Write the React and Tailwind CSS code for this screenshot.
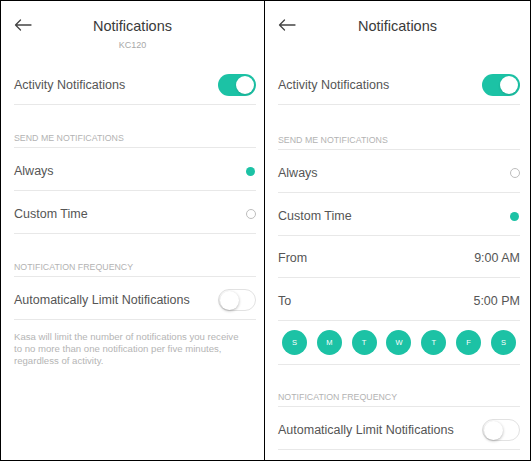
import React from 'react';

const TEAL = 'bg-[#1cc2a5]';

const BackArrow = () => (
  <svg width="18" height="12" viewBox="0 0 18 12" fill="none" stroke="#444" strokeWidth="1.3" strokeLinecap="round" strokeLinejoin="round">
    <path d="M17 6H1.5M6.5 1L1.5 6l5 5" />
  </svg>
);

const Toggle = ({ on }) =>
  on ? (
    <div className={`w-[38px] h-[22px] rounded-full ${TEAL} flex items-center justify-end pr-[2px]`}>
      <div className="w-[18px] h-[18px] rounded-full bg-white shadow-sm" />
    </div>
  ) : (
    <div className="w-[38px] h-[22px] rounded-full bg-white border border-[#e2e2e2] flex items-center pl-[1px]">
      <div className="w-[19px] h-[19px] rounded-full bg-white shadow-[0_1px_3px_rgba(0,0,0,0.3)]" />
    </div>
  );

const Radio = ({ on }) =>
  on ? (
    <div className={`w-[9px] h-[9px] rounded-full ${TEAL} mr-[1px]`} />
  ) : (
    <div className="w-[10px] h-[10px] rounded-full border border-[#bdbdbd]" />
  );

const Row = ({ label, right, h = 'h-[43px]' }) => (
  <div className={`${h} flex items-center justify-between pt-[4px] border-b border-[#e8e8e8]`}>
    <span className="text-[12.5px] text-[#555]">{label}</span>
    {right}
  </div>
);

const Section = ({ title, h = 'h-[43px]' }) => (
  <div className={`${h} flex items-end pb-[4px] border-b border-[#e8e8e8]`}>
    <span className="text-[8.8px] leading-[10px] text-[#b3b3b3]">{title}</span>
  </div>
);

const Header = ({ sub }) => (
  <div className="h-[61px] relative">
    <div className="absolute left-[13px] top-[18px]">
      <BackArrow />
    </div>
    <div className="pt-[16px] text-center text-[14.5px] leading-[18px] text-[#3a3a3a]">Notifications</div>
    {sub && <div className="mt-[5px] text-center text-[9px] leading-[11px] text-[#a8a8a8]">{sub}</div>}
  </div>
);

const days = ['S', 'M', 'T', 'W', 'T', 'F', 'S'];

export default function App() {
  return (
    <div className="w-[531px] h-[461px] flex border border-black bg-white" style={{ fontFamily: '"Liberation Sans", Arial, sans-serif' }}>
      {/* left screen */}
      <div className="w-[263px] h-full">
        <Header sub="KC120" />
        <div className="pl-[13px] pr-[8px]">
          <Row label="Activity Notifications" right={<Toggle on />} />
          <Section title="SEND ME NOTIFICATIONS" />
          <Row label="Always" right={<Radio on />} />
          <Row label="Custom Time" right={<Radio />} />
          <Section title="NOTIFICATION FREQUENCY" />
          <Row label="Automatically Limit Notifications" right={<Toggle />} />
          <p className="pt-[11px] text-[9.6px] leading-[12px] text-[#b5b5b5] pr-[8px]">
            Kasa will limit the number of notifications you receive to no more than one notification per five minutes, regardless of activity.
          </p>
        </div>
      </div>

      <div className="w-px h-full bg-black" />

      {/* right screen */}
      <div className="flex-1 h-full">
        <Header />
        <div className="pl-[13px] pr-[10px]">
          <Row label="Activity Notifications" right={<Toggle on />} />
          <Section title="SEND ME NOTIFICATIONS" h="h-[45px]" />
          <Row label="Always" right={<Radio />} />
          <Row label="Custom Time" right={<Radio on />} />
          <Row label="From" h="h-[42px]" right={<span className="text-[12.5px] text-[#555]">9:00 AM</span>} />
          <Row label="To" right={<span className="text-[12.5px] text-[#555]">5:00 PM</span>} />
          <div className="h-[44px] flex items-center justify-between px-[4px] border-b border-[#e8e8e8]">
            {days.map((d, i) => (
              <div key={i} className={`w-[25px] h-[25px] rounded-full ${TEAL} flex items-center justify-center text-[7.5px] text-white`}>
                {d}
              </div>
            ))}
          </div>
          <Section title="NOTIFICATION FREQUENCY" h="h-[42px]" />
          <Row label="Automatically Limit Notifications" right={<Toggle />} />
        </div>
      </div>
    </div>
  );
}
